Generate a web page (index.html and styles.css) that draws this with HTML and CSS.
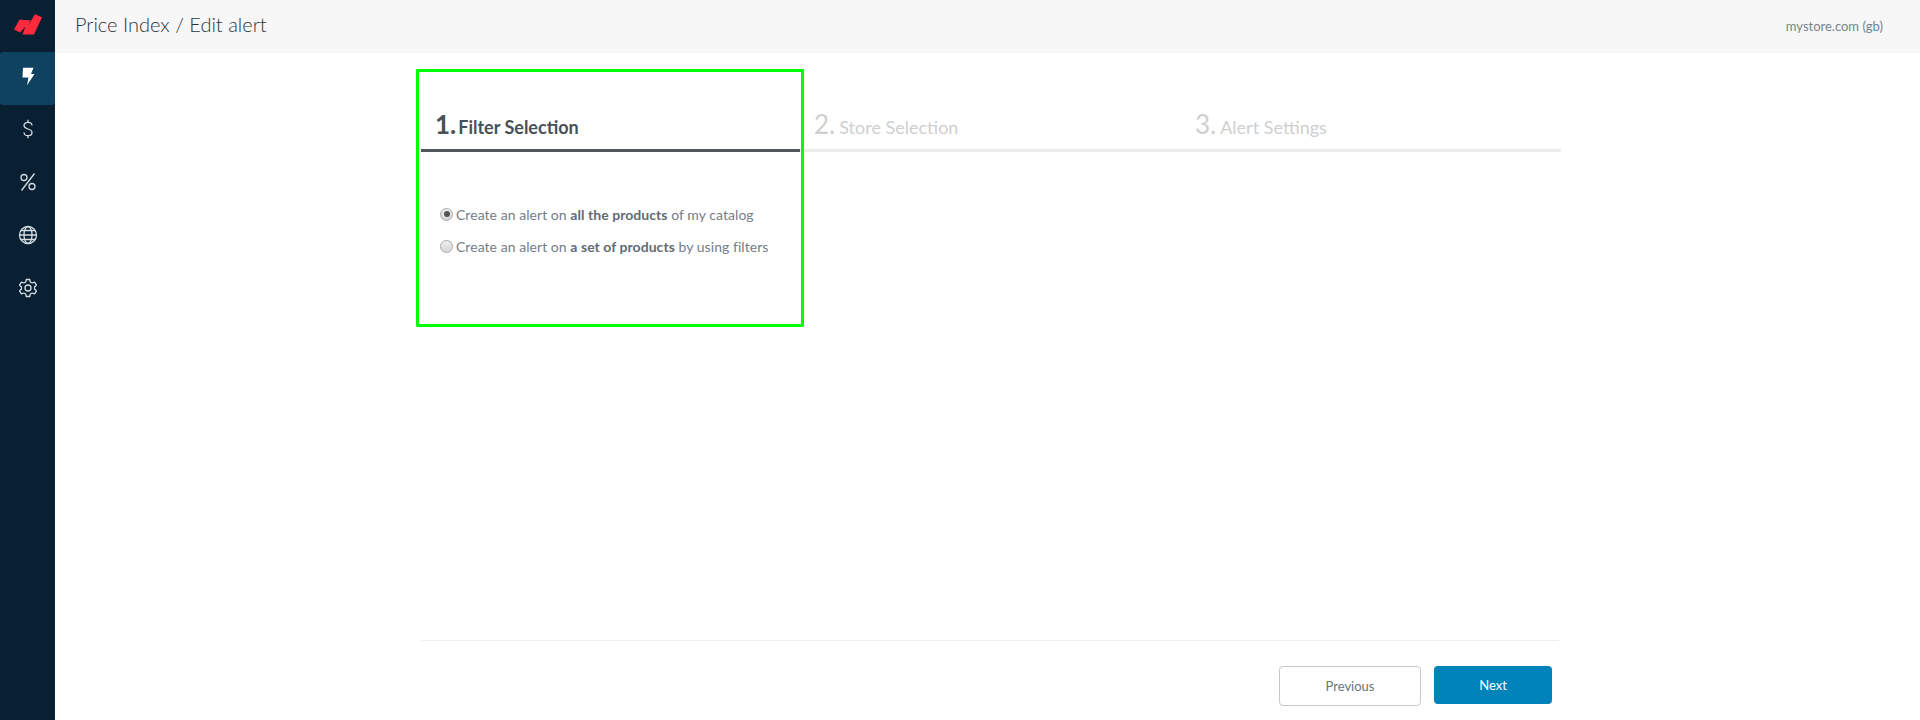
FILE: index.html
```html
<!DOCTYPE html>
<html lang="en">
<head>
<meta charset="utf-8">
<title>Price Index / Edit alert</title>
<link rel="stylesheet" href="styles.css">
</head>
<body>
<div class="app">
  <nav class="sidebar">
    <div class="logo">
      <svg width="55" height="52" viewBox="0 0 55 52"><path class="logo-mark" d="M14 29.500 L19.500 19.500 L30.500 20.500 L27.500 26.500 L35 14.300 L42 17.300 L34 34.500 L22.500 34.500 L25.500 26.500 L20 32.500 Z"/></svg>
    </div>
    <a class="nav-item active">
      <svg width="24" height="24" viewBox="0 0 24 24"><path class="fill" d="M7 3.700 H17.500 L15 10 H18.500 L11 21.300 L12.500 13.500 H6.500 Z"/></svg>
    </a>
    <a class="nav-item">
      <svg width="24" height="24" viewBox="0 0 24 24"><path class="line" d="M16 8.500 C16 6.300 14.300 5.300 12 5.300 C9.500 5.300 8 6.500 8 8.500 C8 10.700 9.800 11.300 12 12 C14.200 12.700 16 13.400 16 15.500 C16 17.500 14.500 18.700 12 18.700 C9.600 18.700 8 17.500 8 15.500 M12 2.800 V5.300 M12 18.700 V21.200"/></svg>
    </a>
    <a class="nav-item">
      <svg width="24" height="24" viewBox="0 0 24 24"><g class="line"><circle cx="8" cy="7.500" r="3"/><circle cx="16" cy="16.500" r="3"/><path d="M18.500 3.500 L5.500 20.500"/></g></svg>
    </a>
    <a class="nav-item">
      <svg width="24" height="24" viewBox="0 0 24 24"><g class="line"><circle cx="12" cy="12" r="8.500"/><ellipse cx="12" cy="12" rx="4" ry="8.500"/><path d="M3.500 12 H20.500 M5 7.500 H19 M5 16.500 H19"/></g></svg>
    </a>
    <a class="nav-item">
      <svg width="24" height="24" viewBox="0 0 24 24"><g class="line"><circle cx="12" cy="12" r="3"/><path d="M10.300 3.500 H13.700 L14.300 6 L16.200 7 L18.600 6.200 L20.400 9.200 L18.500 10.900 V13.100 L20.400 14.800 L18.600 17.800 L16.200 17 L14.300 18 L13.700 20.500 H10.300 L9.700 18 L7.800 17 L5.400 17.800 L3.600 14.800 L5.500 13.100 V10.900 L3.600 9.200 L5.400 6.200 L7.800 7 L9.700 6 Z"/></g></svg>
    </a>
  </nav>
  <div class="main">
    <header class="topbar">
      <h1 class="page-title">Price Index / Edit alert</h1>
      <span class="store">mystore.com (gb)</span>
    </header>
    <div class="wizard">
      <div class="highlight"></div>
      <div class="steps">
        <div class="step current"><span class="num">1.</span> <span class="label">Filter Selection</span></div>
        <div class="step"><span class="num">2.</span> <span class="label">Store Selection</span></div>
        <div class="step"><span class="num">3.</span> <span class="label">Alert Settings</span></div>
      </div>
      <div class="options">
        <label class="option"><span class="radio checked"></span><span>Create an alert on <b>all the products</b> of my catalog</span></label>
        <label class="option"><span class="radio"></span><span>Create an alert on <b>a set of products</b> by using filters</span></label>
      </div>
      <footer class="actions">
        <button class="btn btn-secondary">Previous</button>
        <button class="btn btn-primary">Next</button>
      </footer>
    </div>
  </div>
</div>
</body>
</html>
```
FILE: styles.css
```css
* { box-sizing: border-box; }
html, body { margin: 0; height: 720px; overflow: hidden; background: #fff; }
body { font-family: Lato, "Open Sans", sans-serif; color: #3c4650; }
.app { display: flex; height: 720px; }
.sidebar { width: 55px; flex: none; background: #082032; display: flex; flex-direction: column; }
.logo { height: 52px; }
.logo svg { display: block; }
.logo-mark { fill: #ff2a3e; }
.nav-item { height: 53px; display: flex; justify-content: center; padding-top: 12px; }
.nav-item.active { background: #0f4261; border-radius: 3px 0 3px 3px; }
.nav-item .fill { fill: #fff; }
.line { fill: none; stroke: #d5dde3; stroke-width: 1.300; stroke-linejoin: round; }
.nav-item svg { display: block; }
.main { flex: 1; display: flex; flex-direction: column; min-width: 0; }
.topbar { height: 53px; flex: none; background: #f7f7f7; display: flex; align-items: center; justify-content: space-between; padding: 0 37px 6px 20px; }
.page-title { margin: 0; font-size: 20px; font-weight: 300; color: #2a343e; }
.store { font-size: 13px; color: #74838f; padding-top: 5px; }
.wizard { position: relative; margin-left: 366px; width: 1140px; flex: 1; display: flex; flex-direction: column; }
.highlight { position: absolute; left: -5px; top: 16px; width: 388px; height: 258px; border: 3px solid #00ff00; border-radius: 1px; pointer-events: none; }
.steps { display: grid; grid-template-columns: 379px 381px 380px; margin-top: 47px; }
.step { height: 52px; padding: 8px 14px 0; border-bottom: 3px solid #ececec; color: #cfcfcf; white-space: nowrap; display: flex; align-items: baseline; gap: 4px; }
.step .num { font-size: 26px; font-weight: 400; }
.step .label { font-size: 18px; font-weight: 400; }
.step.current { border-bottom-color: #53575b; color: #4a5056; gap: 2px; }
.step.current .num, .step.current .label { font-weight: 700; }
.options { padding: 52px 0 0 19px; display: flex; flex-direction: column; gap: 12px; }
.option { display: flex; align-items: center; gap: 3px; height: 20px; font-size: 14px; letter-spacing: .05px; color: #757d85; }
.option b { color: #5f6b78; font-weight: 700; }
.radio { width: 13px; height: 13px; border-radius: 50%; border: 1px solid #aaa; background: linear-gradient(#eee, #d6d6d6); display: flex; align-items: center; justify-content: center; }
.radio.checked::after { content: ""; width: 6px; height: 6px; border-radius: 50%; background: #555; }
.actions { margin-top: auto; height: 80px; border-top: 1px solid #eee; display: flex; justify-content: flex-end; align-items: flex-start; gap: 13px; padding: 25px 7px 0 0; width: 1138px; }
.btn { font-family: inherit; font-size: 13px; border-radius: 4px; padding: 0; }
.btn-secondary { width: 142px; height: 40px; background: #fff; border: 1px solid #c8c8c8; color: #6c7379; }
.btn-primary { width: 118px; height: 38px; background: #0082ba; border: 0; color: #fff; }
```
